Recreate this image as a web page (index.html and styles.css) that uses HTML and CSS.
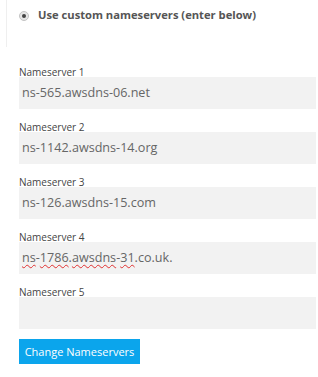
FILE: index.html
```html
<!DOCTYPE html>
<html lang="en">
<head>
    <meta charset="UTF-8">
    <meta name="viewport" content="width=device-width, initial-scale=1.0">
    <title>Nameservers</title>
    <link rel="stylesheet" href="styles.css">
</head>
<body>
    <div class="choice">
        <label class="option">
            <span class="radio"><span class="dot"></span></span>
            Use custom nameservers (enter below)
        </label>
    </div>

    <form class="nsform">
        <div class="field">
            <label>Nameserver 1</label>
            <div class="input">ns-565.awsdns-06.net</div>
        </div>
        <div class="field">
            <label>Nameserver 2</label>
            <div class="input">ns-1142.awsdns-14.org</div>
        </div>
        <div class="field">
            <label>Nameserver 3</label>
            <div class="input">ns-126.awsdns-15.com</div>
        </div>
        <div class="field">
            <label>Nameserver 4</label>
            <div class="input"><span class="typo">ns</span>-<span class="typo">1786</span>.<span class="typo">awsdns</span>-<span class="typo">31</span>.co.uk.</div>
        </div>
        <div class="field">
            <label>Nameserver 5</label>
            <div class="input"></div>
        </div>

        <button type="button" class="submit">Change Nameservers</button>
    </form>
</body>
</html>
```

FILE: styles.css
```css
*{
    margin:0;
    padding:0;
    box-sizing:border-box;
}
body{
    background:white;
    font-family:"Open Sans", "Liberation Sans", sans-serif;
    color:#555;
}
.choice{
    margin-left:6px;
    height:47px;
    border-left:1px solid #efefef;
    padding:8px 0 0 12px;
}
.option{
    display:flex;
    align-items:center;
    gap:9px;
    font-size:11.2px;
    font-weight:bold;
    color:#555;
    line-height:14px;
}
.radio{
    width:10px;
    height:10px;
    border-radius:50%;
    border:1px solid #c4c4c4;
    background:#e6e6e6;
    display:flex;
    justify-content:center;
    align-items:center;
    margin-top:2px;
}
.dot{
    width:4px;
    height:4px;
    border-radius:50%;
    background:#444;
}
.nsform{
    padding:20px 2px 0 19px;
}
.field{
    margin-top:13px;
}
.field:first-child{
    margin-top:0;
}
.field label{
    display:block;
    font-size:10px;
    line-height:10px;
    color:#444;
}
.input{
    height:32px;
    background:#f2f2f2;
    font-size:12.6px;
    line-height:32px;
    padding-left:3px;
    color:#666;
}
.typo{
    text-decoration:underline wavy #e03030;
    text-decoration-thickness:1px;
    text-underline-offset:2px;
}
.submit{
    margin-top:10px;
    border:none;
    background:#0ba5ec;
    color:white;
    font-family:"Open Sans", "Liberation Sans", sans-serif;
    font-size:11px;
    height:25px;
    width:121px;
    padding:0;
}
```
